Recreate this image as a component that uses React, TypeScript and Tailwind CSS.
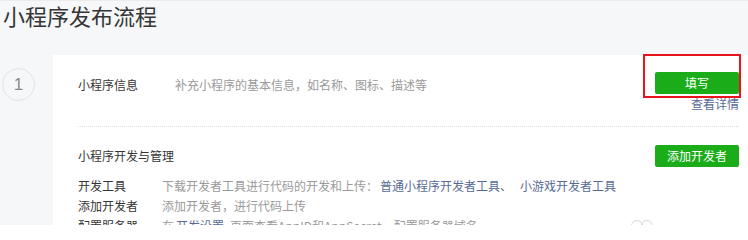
const font = { fontFamily: '"Noto Sans CJK SC", "Noto Sans", sans-serif' }

const devRows = [
  { label: '开发工具', desc: '下载开发者工具进行代码的开发和上传：', links: ['普通小程序开发者工具、', '小游戏开发者工具'] },
  { label: '添加开发者', desc: '添加开发者，进行代码上传', links: [] },
  { label: '配置服务器', desc: '在', links: ['开发设置'], tail: '页面查看AppID和AppSecret，配置服务器域名' },
]

export default function App() {
  return (
    <div style={font} className="w-[748px] h-[225px] overflow-hidden bg-[#f6f7f9] border-t border-[#ececec]">
      {/* 标题 */}
      <h1 className="pl-[3px] h-[54px] text-[22px] leading-[28px] text-[#353535]">小程序发布流程</h1>

      <div className="flex">
        {/* 步骤序号 */}
        <div className="w-[53px] shrink-0 pt-[13px] pl-[2px]">
          <div className="w-[33px] h-[33px] rounded-full border border-[#e2e2e2] flex items-center justify-center text-[17px] text-[#8a8a8a] font-[family-name:Liberation_Sans,Arial,sans-serif]">
            1
          </div>
        </div>

        {/* 内容卡片 */}
        <div className="relative flex-1 bg-white h-[200px] pl-[25px] pr-[9px]">
          {/* 小程序信息 */}
          <div className="flex justify-between h-[71px]">
            <div className="flex mt-[22px] text-[12px] leading-[16px] h-[16px]">
              <span className="w-[97px] text-[#353535]">小程序信息</span>
              <span className="text-[#9a9a9a]">补充小程序的基本信息，如名称、图标、描述等</span>
            </div>
            <div className="mt-[17px] flex flex-col items-end">
              <button className="w-[84px] h-[22px] rounded-[2px] bg-[#1aad19] text-white text-[12px] leading-[22px]">填写</button>
              <a className="mt-[3px] text-[12px] leading-[14px] text-[#576b95]">查看详情</a>
            </div>
          </div>

          {/* 红框标注 */}
          <div className="absolute left-[590px] top-[-1px] w-[98px] h-[44px] border-2 border-[#e8131b]"></div>

          <div className="border-t border-dotted border-[#dcdcdc]"></div>

          {/* 小程序开发与管理 */}
          <div className="flex justify-between items-center mt-[18px] h-[22px]">
            <span className="text-[12px] text-[#353535]">小程序开发与管理</span>
            <button className="w-[84px] h-[22px] rounded-[2px] bg-[#1aad19] text-white text-[12px] leading-[22px]">添加开发者</button>
          </div>

          <div className="mt-[9px]">
            {devRows.map((row) => (
              <div key={row.label} className="flex text-[12px] leading-[20px]">
                <span className="w-[84px] shrink-0 text-[#353535]">{row.label}</span>
                <span className="text-[#9a9a9a]">{row.desc}</span>
                {row.links.map((l) => (
                  <a key={l} className="text-[#576b95] ml-[2px] mr-[6px]">{l}</a>
                ))}
                {row.tail && <span className="text-[#9a9a9a]">{row.tail}</span>}
              </div>
            ))}
          </div>

          <svg className="absolute left-[577px] top-[164px]" width="24" height="14" viewBox="0 0 24 14">
            <circle cx="7" cy="7" r="5.5" fill="none" stroke="#d8d8d8" strokeWidth="1" />
            <circle cx="17" cy="7" r="5.5" fill="none" stroke="#d8d8d8" strokeWidth="1" />
          </svg>
        </div>
      </div>
    </div>
  )
}
